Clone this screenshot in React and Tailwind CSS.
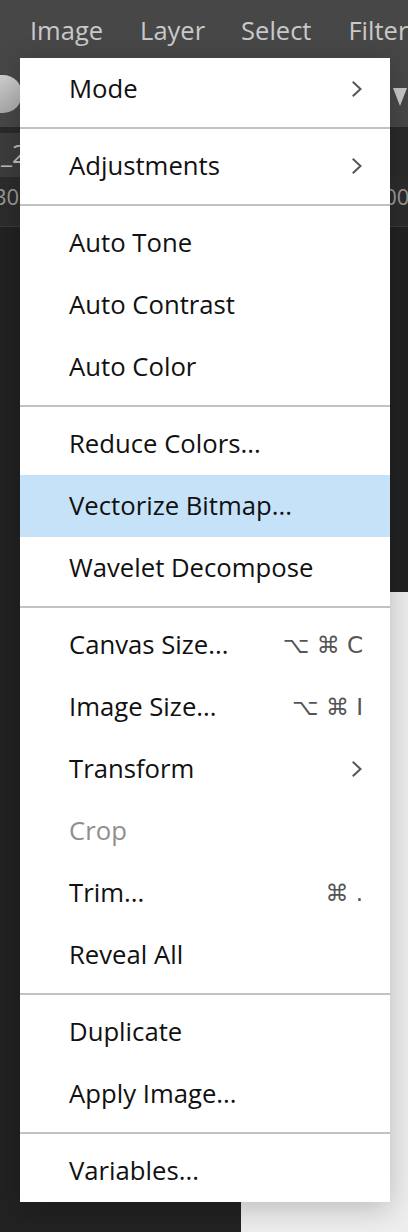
import React from "react";

const Chevron = () => (
  <svg width="12" height="16" viewBox="0 0 12 16" fill="none" className="text-[#555]">
    <path d="M2.5 1.5 L9.5 8 L2.5 14.5" stroke="currentColor" strokeWidth="2" strokeLinecap="square" />
  </svg>
);

const menu = [
  { label: "Mode", sub: true },
  "sep",
  { label: "Adjustments", sub: true },
  "sep",
  { label: "Auto Tone" },
  { label: "Auto Contrast" },
  { label: "Auto Color" },
  "sep",
  { label: "Reduce Colors..." },
  { label: "Vectorize Bitmap...", active: true },
  { label: "Wavelet Decompose" },
  "sep",
  { label: "Canvas Size...", keys: "⌥ ⌘ C" },
  { label: "Image Size...", keys: "⌥ ⌘ I" },
  { label: "Transform", sub: true },
  { label: "Crop", disabled: true },
  { label: "Trim...", keys: "⌘ ." },
  { label: "Reveal All" },
  "sep",
  { label: "Duplicate" },
  { label: "Apply Image..." },
  "sep",
  { label: "Variables..." },
];

const App = () => {
  return (
    <div className="relative w-[408px] h-[1232px] overflow-hidden bg-[#222222] font-['Open_Sans',sans-serif]">
      {/* Top menu bar */}
      <div className="h-[60px] bg-[#474747] flex items-center text-[25.5px] text-[#c9c9c9] whitespace-nowrap">
        <span className="ml-[30px]">Image</span>
        <span className="ml-[37px]">Layer</span>
        <span className="ml-[36px]">Select</span>
        <span className="ml-[37px]">Filter</span>
      </div>
      {/* Toolbar */}
      <div className="h-[67px] bg-[#474747] flex items-center justify-between">
        <div className="w-[40px] h-[38px] -ml-[18px] rounded-full bg-gradient-to-b from-[#cfcfcf] to-[#a9a9a9]" />
        <svg width="16" height="20" viewBox="0 0 16 20" className="mt-[4px]">
          <path d="M1 2 L15 2 L8 20 Z" fill="#c8c8c8" />
        </svg>
      </div>
      <div className="h-[6px] bg-[#2a2a2a]" />
      {/* Document tabs */}
      <div className="h-[44px] flex bg-[#2a2a2a]">
        <div className="w-[60px] bg-[#3d3d3d] flex items-center text-[25px] text-[#bdbdbd] pl-[1px] pb-[2px]">_2</div>
      </div>
      {/* Ruler */}
      <div className="h-[50px] bg-[#2c2c2c] border-b border-[#3a3a3a] flex justify-between text-[22px] text-[#9a9a9a] leading-none">
        <div className="flex flex-col -ml-[6px] pt-[8px]">
          <span>300</span>
          <span className="ml-[31px] mt-[4px] w-px h-[9px] bg-[#8a8a8a]" />
        </div>
        <div className="flex flex-col pt-[8px] -mr-[14px]">
          <span>000</span>
          <span className="ml-[2px] mt-[4px] w-px h-[9px] bg-[#8a8a8a]" />
        </div>
      </div>

      {/* Light panel behind the menu */}
      <div className="absolute left-[241px] top-[592px] right-0 bottom-0 bg-[#eeeeee]" />

      {/* Image menu */}
      <div className="absolute left-[20px] top-[58px] w-[370px] bg-white shadow-[0_6px_28px_rgba(0,0,0,0.22)] flex flex-col">
        {menu.map((item, i) =>
          item === "sep" ? (
            <div key={i} className="pt-[7px] pb-[6px]">
              <div className="h-[2px] bg-[#c2c2c2]" />
            </div>
          ) : (
            <div
              key={i}
              className={`h-[62px] flex items-center justify-between pl-[49px] pr-[27px] text-[25.7px] whitespace-nowrap ${
                item.active ? "bg-[#c6e2f9]" : ""
              } ${item.disabled ? "text-[#8f8f8f]" : "text-[#111111]"}`}
            >
              <span>{item.label}</span>
              {item.sub && <Chevron />}
              {item.keys && (
                <span className="font-['DejaVu_Sans',sans-serif] text-[23px] text-[#555555]">{item.keys}</span>
              )}
            </div>
          )
        )}
      </div>
    </div>
  );
};

export default App;
